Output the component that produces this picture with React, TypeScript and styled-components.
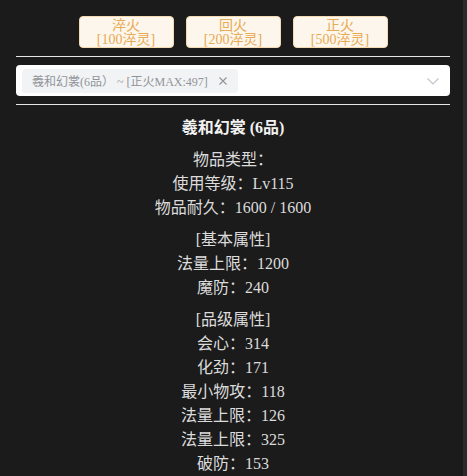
import styled, { createGlobalStyle } from 'styled-components'

const GlobalStyle = createGlobalStyle`
  html, body {
    margin: 0;
    padding: 0;
    background: #1b1b1b;
  }
  body {
    font-family: "Liberation Serif", "Noto Sans CJK SC", serif;
    overflow: hidden;
  }
`

interface Section {
  header?: string
  lines: string[]
}

const sections: Section[] = [
  { lines: ['物品类型：', '使用等级：Lv115', '物品耐久：1600 / 1600'] },
  { header: '[基本属性]', lines: ['法量上限：1200', '魔防：240'] },
  {
    header: '[品级属性]',
    lines: ['会心：314', '化劲：171', '最小物攻：118', '法量上限：126', '法量上限：325', '破防：153']
  }
]

const actions = [
  { name: '淬火', cost: '[100淬灵]' },
  { name: '回火', cost: '[200淬灵]' },
  { name: '正火', cost: '[500淬灵]' }
]

const App = () => {
  return (
    <Page>
      <GlobalStyle />
      <Main>
        <ButtonRow>
          {actions.map((a) => (
            <FireButton key={a.name}>
              <span>{a.name}</span>
              <span>{a.cost}</span>
            </FireButton>
          ))}
        </ButtonRow>
        <Divider />
        <Select>
          <Tag>
            <TagText>羲和幻裳(6品） ~ [正火MAX:497]</TagText>
            <TagClose>
              <svg width="10" height="10" viewBox="0 0 10 10">
                <path d="M1.5 1.5 L8.5 8.5 M8.5 1.5 L1.5 8.5" stroke="#909399" strokeWidth="1.1" />
              </svg>
            </TagClose>
          </Tag>
          <Chevron width="14" height="14" viewBox="0 0 14 14">
            <path d="M1.5 4.5 L7 10 L12.5 4.5" fill="none" stroke="#c0c4cc" strokeWidth="1.2" />
          </Chevron>
        </Select>
        <Divider />
        <Details>
          <Title>羲和幻裳 (6品)</Title>
          {sections.map((s, i) => (
            <Block key={i}>
              {s.header && <Line>{s.header}</Line>}
              {s.lines.map((l, j) => (
                <Line key={j}>{l}</Line>
              ))}
            </Block>
          ))}
        </Details>
      </Main>
      <ScrollTrack />
    </Page>
  )
}

const Page = styled.div`
  display: flex;
  height: 476px;
  overflow: hidden;
`

const Main = styled.div`
  flex: 1;
  padding: 16px 13px 0 16px;
  display: flex;
  flex-direction: column;
`

const ScrollTrack = styled.div`
  width: 4px;
  background: #2a2a2a;
`

const ButtonRow = styled.div`
  display: flex;
  justify-content: center;
  gap: 12px;
`

const FireButton = styled.button`
  width: 95px;
  height: 32px;
  padding: 2px 0 0;
  display: flex;
  flex-direction: column;
  align-items: center;
  justify-content: center;
  background: #fdf6ec;
  border: 1px solid #f5dab1;
  border-radius: 4px;
  color: #e8aa55;
  font-family: inherit;
  font-size: 14px;
  line-height: 14px;
  cursor: pointer;
`

const Divider = styled.div`
  height: 1px;
  background: #e6e6e6;
  margin: 8px 0;
`

const Select = styled.div`
  height: 32px;
  background: #fff;
  border-radius: 4px;
  display: flex;
  align-items: center;
  padding: 0 10px 0 6px;
`

const Tag = styled.div`
  height: 24px;
  display: flex;
  align-items: center;
  gap: 8px;
  padding: 0 8px 0 10px;
  background: #f2f3f5;
  border-radius: 4px;
  color: #909399;
  font-size: 12px;
`

const TagText = styled.span`
  white-space: nowrap;
`

const TagClose = styled.span`
  display: flex;
  width: 14px;
  height: 14px;
  align-items: center;
  justify-content: center;
`

const Chevron = styled.svg`
  margin-left: auto;
`

const Details = styled.div`
  padding-top: 3px;
  display: flex;
  flex-direction: column;
  align-items: center;
  gap: 8px;
  color: #dcdcdc;
  font-size: 16px;
`

const Title = styled.div`
  font-weight: bold;
  color: #f2f2f2;
  line-height: 24px;
`

const Block = styled.div`
  display: flex;
  flex-direction: column;
  align-items: center;
`

const Line = styled.div`
  line-height: 24px;
  white-space: nowrap;
`

export default App
